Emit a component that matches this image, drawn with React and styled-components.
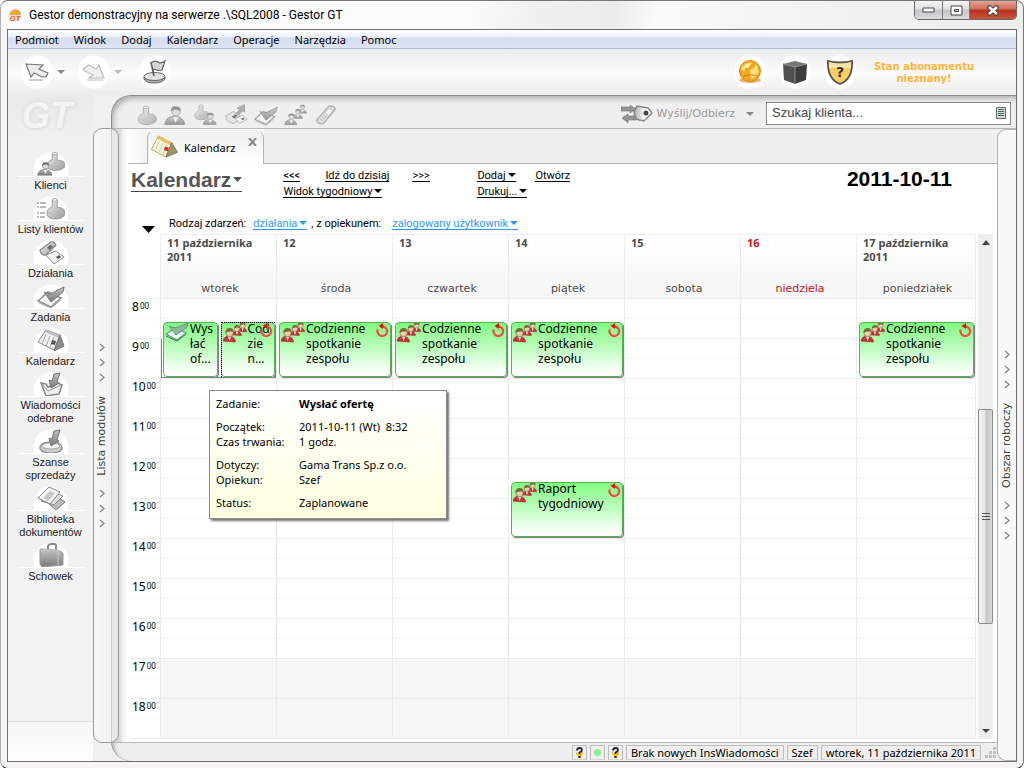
import React from "react";
import styled, { createGlobalStyle, css } from "styled-components";

const ui = `"Noto Sans", "Open Sans", sans-serif`;
const narrow = `Roboto, "Noto Sans", sans-serif`;
const arial = `"Liberation Sans", Arial, sans-serif`;

const Global = createGlobalStyle`
  *, *::before, *::after { box-sizing: border-box; }
  body { margin: 0; font: 11px/15px ${ui}; color: #000; background: #fff; }
  button { font: inherit; color: inherit; background: none; border: 0; padding: 0; margin: 0; cursor: pointer; text-align: inherit; }
  svg { display: block; }
`;

/* ---------- window frame ---------- */

const Window = styled.div`
  min-height: 100vh;
  display: flex;
  flex-direction: column;
  padding: 0 6px 6px;
  border: 1px solid #777;
  border-left-color: #b0aeae;
  border-bottom-color: #222;
  border-radius: 8px;
  background: #f6f4f4;
`;

const TitleBar = styled.header`
  height: 28px;
  display: flex;
  align-items: flex-start;
  margin: 0 -6px;
  padding: 0 6px 0 7px;
  border-radius: 8px 8px 0 0;
  background: linear-gradient(100deg, #fbfbfb 0 46%, #f0f0f0 52%, #ececec 60%, #fafafa 64%, #f2f2f2 80%, #ededed);
`;

const TitleText = styled.h1`
  flex: 1;
  margin: 5px 0 0 6px;
  font: 12px/18px ${narrow};
`;

const AppIcon = styled.div`
  margin-top: 7px;
`;

const WindowButtons = styled.div`
  display: flex;
  height: 19px;
  border: 1px solid #67676c;
  border-top: 0;
  border-radius: 0 0 5px 5px;
  overflow: hidden;
`;

const WindowButton = styled.button`
  width: ${(p) => (p.$close ? 47 : 27)}px;
  display: grid;
  place-items: center;
  background: ${(p) =>
    p.$close
      ? "linear-gradient(#e2a595, #cf6b57 45%, #b8311c 50%, #c8553a)"
      : "linear-gradient(#f6f6f6, #dedede 45%, #c4c4c6 50%, #dcdcdc)"};
  & + & { border-left: 1px solid #77777c; }
`;

const Client = styled.div`
  flex: 1;
  display: flex;
  flex-direction: column;
  border: 1px solid #6e6e6e;
  background: #f0f0f0;
`;

const MenuBar = styled.nav`
  height: 19px;
  display: flex;
  gap: 15px;
  padding: 0 7px;
  border-bottom: 1px solid #b5bdd4;
  background: linear-gradient(#fff, #eceff8 7px, #d5dcee 8px, #dfe5f4);
`;

const MenuItem = styled.button`
  font-size: 11px;
  line-height: 19px;
`;

/* ---------- upper toolbar ---------- */

const TopBar = styled.div`
  height: 46px;
  display: flex;
  align-items: center;
  padding: 0 37px 0 12px;
  background: linear-gradient(#ececec, #fbfbfb 55%, #ececec);
`;

const RoundButton = styled.button`
  width: 34px;
  height: 34px;
  border-radius: 50%;
  display: grid;
  place-items: center;
  background: radial-gradient(#fff 58%, #fdfdfd 66%, #f6f6f6 72%);
`;

const DropButton = styled.button`
  width: 14px;
  height: 34px;
  display: grid;
  place-items: center;
  margin-right: ${(p) => p.$gap || 0}px;
`;

const Subscription = styled.p`
  width: 110px;
  margin: 1px 0 0 12px;
  color: #ffb43a;
  font: bold 10px/12px "DejaVu Sans", Verdana, sans-serif;
  text-align: center;
`;

const Group = styled.div`
  display: flex;
  align-items: center;
  gap: ${(p) => p.$gap || 0}px;
`;

const Spacer = styled.div`
  flex: 1;
`;

/* ---------- body ---------- */

const Body = styled.div`
  flex: 1;
  display: grid;
  grid-template-columns: 85px 18px minmax(0, 1fr);
`;

const Sidebar = styled.aside`
  display: flex;
  flex-direction: column;
  background: linear-gradient(#eaeaea, #f0f0f0 40px, #f2f2f2);
`;

const Logo = styled.div`
  height: 57px;
  padding: 0 0 0 14px;
  color: #f5f5f5;
  font: italic bold 36px/42px ${arial};
  text-shadow: 0 0 5px #dadada, 1px 1px 3px #dfdfdf;
`;

const ModuleList = styled.nav`
  flex: 1;
  display: flex;
  flex-direction: column;
`;

const Module = styled.button`
  display: flex;
  flex-direction: column;
  align-items: center;
  padding: 0 0 4px;
  color: #222;
  font: 11px/13px ${arial};
  text-align: center;
  white-space: pre-line;
`;

const ModuleIcon = styled.span`
  width: 66px;
  height: 25px;
  display: flex;
  justify-content: center;
  align-items: flex-end;
  margin-bottom: 2px;
  border-bottom: 1px solid #fff;
  background: radial-gradient(circle at 50% 18px, #fff 17px, transparent 18px);
`;

const SidebarFoot = styled.div`
  height: 40px;
  border-top: 1px solid #e2e2e2;
  background: linear-gradient(#f6f6f6, #fefefe);
`;

const ModuleStrip = styled.button`
  z-index: 1;
  width: 26px;
  margin: 33px 0 18px;
  display: flex;
  flex-direction: column;
  align-items: center;
  justify-content: center;
  gap: 14px;
  padding-right: 8px;
  border: 1px solid #9a9a9a;
  border-radius: 9px;
  background: linear-gradient(90deg, rgba(252, 252, 252, 0.6), rgba(240, 240, 240, 0.6));
`;

const Chevrons = styled.span`
  display: flex;
  flex-direction: column;
  gap: 6px;
`;

const VerticalText = styled.span`
  writing-mode: vertical-rl;
  transform: rotate(180deg);
  color: #444;
  font: 11px/14px "DejaVu Sans", Verdana, sans-serif;
`;

const Panel = styled.main`
  display: flex;
  flex-direction: column;
  border-top: 1px solid #8e8e8e;
  border-left: 1px solid #8e8e8e;
  border-radius: 20px 0 0 20px;
  background: #efefef;
  box-shadow: inset 3px 4px 5px -1px #b4b4b4;
  overflow: hidden;
`;

const PanelTools = styled.div`
  height: 33px;
  display: flex;
  align-items: center;
  padding: 2px 5px 0 22px;
  border-bottom: 1px solid #b8b8b8;
`;

const ToolButton = styled.button`
  width: 24px;
  height: 26px;
  display: grid;
  place-items: end center;
  opacity: 0.75;
`;

const SendButton = styled.button`
  display: flex;
  align-items: center;
  gap: 3px;
  margin-right: 12px;
  padding-top: 2px;
  color: #9a9a9a;
  font: 11px/16px "DejaVu Sans", Verdana, sans-serif;
  svg + svg { margin-left: 8px; }
`;

const SearchBox = styled.label`
  width: 245px;
  height: 23px;
  display: flex;
  align-items: center;
  padding: 0 4px 0 5px;
  border: 1px solid #8a8a8a;
  background: #fff;
`;

const SearchInput = styled.input`
  flex: 1;
  min-width: 0;
  border: 0;
  outline: 0;
  padding: 0;
  background: none;
  color: #444;
  font: 13px/20px ${arial};
  &::placeholder { color: #444; opacity: 1; }
`;

const PanelRow = styled.div`
  flex: 1;
  display: grid;
  grid-template-columns: minmax(0, 1fr) 19px;
`;

const MainColumn = styled.div`
  display: flex;
  flex-direction: column;
`;

const WorkArea = styled.section`
  flex: 1;
  display: flex;
  flex-direction: column;
  padding: 0 0 3px 16px;
  background: linear-gradient(90deg, #d8d8d8 7px, #f2f2f2 11px, #fff 16px);
  border-bottom: 1px solid #b8b8b8;
`;

const TabBar = styled.div`
  height: 35px;
  display: flex;
  &::before {
    content: "";
    width: 19px;
    border-bottom: 1px solid #b4b4b4;
    background: linear-gradient(90deg, #fff, #f2f2f2);
  }
  &::after {
    content: "";
    flex: 1;
    border-bottom: 1px solid #b4b4b4;
    background: #efefef;
  }
`;

const Tab = styled.div`
  width: 117px;
  display: flex;
  align-items: flex-start;
  padding: 5px 6px 0 3px;
  border: 1px solid #b4b4b4;
  border-top-color: transparent;
  border-bottom: 0;
  border-radius: 9px 9px 0 0;
  background: linear-gradient(#f0f0f0, #fff);
`;

const TabTitle = styled.button`
  flex: 1;
  display: flex;
  align-items: center;
  gap: 6px;
`;

const TabClose = styled.button`
  margin-top: 3px;
`;

const Heading = styled.div`
  display: flex;
  align-items: flex-start;
  height: 50px;
  padding: 4px 45px 0 3px;
`;

const ViewTitle = styled.button`
  display: flex;
  align-items: center;
  gap: 2px;
  height: 24px;
  border-bottom: 1px solid #444;
  color: #555;
  font: bold 21px/24px ${arial};
`;

const LinkColumn = styled.div`
  width: ${(p) => p.$width}px;
  margin-left: ${(p) => p.$left || 0}px;
  padding-top: 1px;
  display: flex;
  flex-direction: column;
  align-items: flex-start;
  gap: 3px;
`;

const LinkRow = styled.div`
  display: grid;
  grid-template-columns: ${(p) => p.$columns};
  justify-items: start;
`;

const Link = styled.a`
  display: inline-flex;
  align-items: center;
  gap: 2px;
  height: 13px;
  font-family: ${narrow};
  line-height: 13px;
  color: ${(p) => (p.$blue ? "#2f96f3" : "#000")};
  text-decoration: none;
  border-bottom: 1px solid currentColor;
`;

const DateTitle = styled.h2`
  margin: -2px 0 0;
  font: bold 21px/25px ${arial};
`;

const Filters = styled.div`
  height: 20px;
  display: flex;
  align-items: center;
  padding: 0 0 1px 14px;
`;

const FilterText = styled.span`
  margin: 0 ${(p) => p.$right}px 0 ${(p) => p.$left}px;
  font-family: ${narrow};
`;

const ExpandButton = styled.button`
  align-self: flex-end;
  width: 13px;
`;

/* ---------- calendar ---------- */

const CalendarRow = styled.div`
  flex: 1;
  display: flex;
  gap: 2px;
  padding: 0 4px 0 2px;
`;

const Calendar = styled.div`
  flex: 1;
  display: grid;
  grid-template-columns: 30px repeat(6, minmax(0, 116fr)) minmax(0, 119fr);
  border-right: 1px solid #ececec;
  align-content: start;
`;

const DayHead = styled.div`
  height: 64px;
  display: flex;
  flex-direction: column;
  justify-content: space-between;
  padding: 1px 0 1px 6px;
  border-left: 1px solid #ececec;
  border-top: 1px solid #ececec;
  background: linear-gradient(#fff, #f5f5f5);
  color: ${(p) => (p.$sunday ? "#cc1018" : "#4c4c4c")};
`;

const DayDate = styled.strong`
  max-width: 96px;
  font-size: 11px;
  line-height: 14px;
`;

const DayName = styled.span`
  padding-right: 3px;
  text-align: center;
  font: 11px/16px "DejaVu Sans", Verdana, sans-serif;
`;

const slots = css`
  background-image: linear-gradient(#ececec 1px, transparent 1px 20px, #f6f6f6 20px 21px, transparent 21px);
  background-size: 100% 40px;
`;

const Hours = styled.div`
  display: grid;
  grid-auto-rows: 40px;
  border-bottom: 1px solid #ececec;
  ${slots}
`;

const Hour = styled.div`
  display: flex;
  align-items: flex-start;
  padding: 1px 0 0 2px;
  font-size: 12px;
  line-height: 15px;
  sup { font-size: 8px; line-height: 9px; margin: 2px 0 0 1px; }
`;

const DayBody = styled.div`
  display: grid;
  grid-template-rows: repeat(22, 20px);
  grid-template-columns: repeat(${(p) => p.$columns}, minmax(0, 1fr));
  column-gap: 3px;
  padding: 0 1px 0 2px;
  border-left: 1px solid #ececec;
  border-bottom: 1px solid #ececec;
  background-color: #fff;
  ${slots}
  &::before {
    content: "";
    grid-row: 19 / 23;
    grid-column: 1 / -1;
    margin: 1px -1px 0 -2px;
    background: linear-gradient(#f6f6f6 0 39px, #ececec 39px 40px, #f6f6f6 40px);
  }
`;

const Selection = styled.div`
  grid-area: 3 / 1 / 5 / 3;
  margin: 1px -1px 0 -2px;
  border: 1px solid #4a8fd8;
  border-top: 0;
`;

const EventBox = styled.article`
  grid-row: ${(p) => p.$row} / span 3;
  grid-column: ${(p) => p.$col || 1};
  margin: 4px 0 1px;
  display: flex;
  align-items: flex-start;
  position: relative;
  padding: 0 1px;
  border: 1px solid #52b552;
  border-radius: 4px;
  background: linear-gradient(#80fc80, #c8fdc8 55%, #fff 95%);
  box-shadow: 1px 1px 0 #808080;
  font-size: 12px;
  line-height: 15px;
  &::after {
    content: "";
    display: ${(p) => (p.$focused ? "block" : "none")};
    position: absolute;
    inset: -1px;
    border: 1px dotted #000;
    border-right: 0;
    border-bottom: 0;
  }
`;

const EventText = styled.p`
  flex: 1;
  min-width: 0;
  margin: -2px 0 0 1px;
  white-space: pre-line;
`;

const Repeat = styled.span`
  position: absolute;
  top: 0;
  right: 1px;
`;

const Tooltip = styled.dl`
  position: absolute;
  z-index: 3;
  left: 45px;
  top: 67px;
  width: 238px;
  display: grid;
  grid-template-columns: 83px 1fr;
  margin: 0;
  padding: 5px 6px 8px;
  border: 1px solid #888;
  background: linear-gradient(#fff, #ffffe1);
  box-shadow: 2px 2px 2px #777;
  font-size: 11px;
  line-height: 15px;
  dt, dd { margin: 0; white-space: pre; }
`;

const Detail = styled.div`
  display: contents;
  dt, dd { padding-bottom: ${(p) => (p.$gap ? 8 : 0)}px; }
`;

const ScrollBar = styled.div`
  width: 15px;
  display: flex;
  flex-direction: column;
  align-items: center;
  justify-content: space-between;
  padding: 6px 0;
  background: #ededed;
`;

const ScrollThumb = styled.div`
  width: 15px;
  height: 215px;
  margin-top: 58px;
  display: grid;
  place-items: center;
  border: 1px solid #8c8c8c;
  border-radius: 2px;
  background: linear-gradient(90deg, #f6f6f6, #e6e6e8 45%, #c6c6ca 55%, #d8d8da);
`;

const StatusBar = styled.footer`
  height: 18px;
  display: flex;
  justify-content: flex-end;
  align-items: stretch;
  gap: 3px;
  padding: 2px 0 1px;
`;

const StatusCell = styled.div`
  display: flex;
  align-items: center;
  padding: 0 ${(p) => (p.$icon ? 3 : 4)}px;
  border: 1px solid #bdbdbd;
  border-bottom-color: #d8d8d8;
  line-height: 13px;
`;

const WorkStrip = styled.button`
  display: flex;
  flex-direction: column;
  align-items: center;
  justify-content: center;
  gap: 14px;
  border: 1px solid #b0b0b0;
  border-right: 0;
  border-radius: 9px 0 0 9px;
  background: #f8f8f8;
`;

/* ---------- drawings ---------- */

const Caret = ({ size = 8, color = "#000" }) => (
  <svg width={size} height={Math.ceil(size / 2)} viewBox="0 0 8 4" preserveAspectRatio="none" aria-hidden="true">
    <path d="M0 0h8L4 4z" fill={color} />
  </svg>
);

const ChevronStack = () => (
  <Chevrons>
    {[0, 1, 2].map((i) => (
      <svg key={i} width="6" height="9" viewBox="0 0 6 9" aria-hidden="true">
        <path d="M1 1l4 3.500L1 8" fill="none" stroke="#888" strokeWidth="1.300" />
      </svg>
    ))}
  </Chevrons>
);

const Svg = ({ w = 24, h = 22, box = "0 0 28 24", children }) => (
  <svg width={w} height={h} viewBox={box} aria-hidden="true">
    <defs>
      <linearGradient id="metal" x1="0" y1="0" x2="1" y2="1">
        <stop offset="0" stopColor="#f0f0f0" />
        <stop offset="1" stopColor="#9a9a9a" />
      </linearGradient>
      <linearGradient id="dark" x1="0" y1="0" x2="0" y2="1">
        <stop offset="0" stopColor="#c2c2c2" />
        <stop offset="1" stopColor="#7a7a7a" />
      </linearGradient>
    </defs>
    {children}
  </svg>
);

const Pawn = () => (
  <>
    <path d="M11 10V3q3-2 6 0v8q8 0 9 4v4q-5 5-14 4-6-1-7-4v-4q1-3 6-5z" fill="url(#metal)" stroke="#959595" />
    <path d="M6 16q8 5 19-1M13 20v2M17 20v2M21 18v2" fill="none" stroke="#b5b5b5" />
    <ellipse cx="14" cy="3" rx="3" ry="1.500" fill="#f4f4f4" stroke="#a5a5a5" />
  </>
);
const Person = ({ x = 0, y = 0, s = 1 }) => (
  <g transform={`translate(${x} ${y}) scale(${s})`}>
    <path d="M1 23q1-8 8-9l5-1 6 3q4 2 4 7z" fill="url(#dark)" stroke="#777" />
    <path d="M11 14l2 7 4-6z" fill="#f4f4f4" />
    <circle cx="14" cy="8" r="5" fill="#d9d9d9" stroke="#888" />
    <path d="M8 8q0-7 6-6 7 0 5 6-3-3-7-2z" fill="#777" />
  </g>
);

const shapes = {
  pawn: <Pawn />,
  person: <Person />,
  client: (
    <>
      <g transform="translate(-3 -1) scale(.8)"><Pawn /></g>
      <Person x={10} y={8} s={0.66} />
    </>
  ),
  clientSide: (
    <>
      <g transform="translate(6 -1) scale(.84)"><Pawn /></g>
      <Person x={0} y={9} s={0.62} />
    </>
  ),
  list: (
    <>
      <g transform="translate(6 1) scale(.84 .95)"><Pawn /></g>
      <path d="M0 7h2m1 0h6M0 11h2m1 0h6M0 17h2m1 0h5M0 21h2m1 0h5" stroke="#777" />
    </>
  ),
  action: (
    <>
      <path d="M9 15l10-4 8 6-10 7z" fill="#f2f2f2" stroke="#909090" />
      <path d="M19 17l3-2 2 2-3 2z" fill="#555" />
      <path d="M3 10L14 2q3-1 5 3L9 15q-5 1-6-5z" fill="url(#metal)" stroke="#8a8a8a" strokeWidth="1.300" />
      <path d="M10 8l3-3 3 1-3 4z" fill="#666" />
    </>
  ),
  phoneNote: (
    <>
      <path d="M2 13l9-5 10 7-10 7q-9-2-9-9z" fill="#e4e4e4" stroke="#999" />
      <path d="M14 10l5-5-4-1 9-4v9l-2-2-5 5z" fill="#999" stroke="#888" />
      <path d="M13 16l9-4 5 5-9 5z" fill="#f2f2f2" stroke="#999" />
      <path d="M9 14l4-3 3 2-4 3zM20 16l3-1 1 2-3 1z" fill="#555" />
    </>
  ),
  task: (
    <>
      <path d="M1 17l10-9 13 6-10 9z" fill="#f4f4f4" stroke="#8d8d8d" strokeWidth="1.500" />
      <path d="M2 19l12 5 10-8" fill="none" stroke="#aaa" />
      <path d="M7 8l6 2L27 3l-1 5-12 10z" fill="url(#dark)" stroke="#7c7c7c" />
    </>
  ),
  group: (
    <>
      <Person x={15} y={-1} s={0.48} />
      <Person x={9} y={4} s={0.52} />
      <Person x={0} y={9} s={0.62} />
    </>
  ),
  mobile: (
    <>
      <path d="M3 18L17 2q5-2 8 3L11 22q-6 1-8-4z" fill="#ddd" stroke="#999" strokeWidth="1.500" />
      <path d="M13 9l5-5 4 3-5 6z" fill="#fff" stroke="#aaa" />
      <path d="M7 16l4 3M9 14l4 3M11 12l4 3" stroke="#aaa" />
    </>
  ),
  calendar: (
    <>
      <path d="M1 14L9 2l14 5-6 15z" fill="#f0f0f0" stroke="#8d8d8d" />
      <path d="M9 2l14 5-1 3L8 4z" fill="#bbb" />
      <path d="M23 7l4 11-10 5z" fill="#8a8a8a" stroke="#777" />
      <path d="M9 6l-4 10M13 8L9 18M17 9l-4 11" stroke="#aaa" />
      <path d="M15 12l4 1-1 4-4-1z" fill="#555" />
    </>
  ),
  inbox: (
    <>
      <path d="M4 11l5 1 2 3 10-4 4 2-3 9-13 2z" fill="#eee" stroke="#888" strokeWidth="1.500" />
      <path d="M4 11l7 8 13-6" fill="none" stroke="#999" />
      <path d="M17 2l6-1-3 9 2 1-8 5-2-8 3 1z" fill="url(#dark)" stroke="#777" />
    </>
  ),
  sale: (
    <>
      <path d="M3 18q1-5 11-5t11 5v2q-2 4-11 4T3 20z" fill="#ccc" stroke="#888" strokeWidth="1.200" />
      <ellipse cx="14" cy="17" rx="9" ry="3" fill="#f2f2f2" stroke="#aaa" />
      <path d="M17 2l6-1-3 10 2 1-8 5-2-8 3 1z" fill="url(#dark)" stroke="#777" />
    </>
  ),
  library: (
    <>
      <path d="M12 18l9-7 7 5-9 8z" fill="#bbb" stroke="#777" />
      <path d="M4 15L14 5l12 5-9 9z" fill="#ddd" stroke="#888" />
      <path d="M1 12L12 1l11 5-10 12z" fill="#f4f4f4" stroke="#888" />
      <path d="M6 12l7-7 5 2-7 8z" fill="#c6c6c6" />
    </>
  ),
  briefcase: (
    <>
      <path d="M11 6V3q1-2 3-2h3q2 0 2 2v4" fill="none" stroke="#888" strokeWidth="2" />
      <path d="M3 6l18 1 5 3v12L5 24l-2-3z" fill="url(#dark)" stroke="#999" />
      <path d="M4 7h17v15" fill="none" stroke="#ccc" />
    </>
  ),
};

const Drawn = ({ name, w, h }) => <Svg w={w} h={h}>{shapes[name]}</Svg>;

const BackArrow = () => (
  <svg width="24" height="20" viewBox="0 0 24 20" aria-hidden="true">
    <path d="M4 18h14" stroke="#ccc" strokeWidth="2" />
    <path d="M1 2l17 1-4 4 9 4-2 4h-4l-8-4-3 4z" fill="#ececec" stroke="#777" strokeWidth="1.200" />
  </svg>
);
const ForwardArrow = () => (
  <svg width="24" height="20" viewBox="0 0 24 20" aria-hidden="true">
    <path d="M5 18h16" stroke="#ddd" strokeWidth="2" />
    <path d="M1 7l6-4 7 4 3-4 5 13H7l4-3-8-4z" fill="#f0f0f0" stroke="#bcbcbc" strokeWidth="1.200" />
  </svg>
);
const FlagStand = () => (
  <svg width="24" height="24" viewBox="0 0 24 24" aria-hidden="true">
    <path d="M1 17v2q2 4 10 4t11-4v-2z" fill="#aaa" stroke="#666" />
    <ellipse cx="11.500" cy="16.500" rx="10.500" ry="4" fill="#e2e2e2" stroke="#666" />
    <path d="M11 16L8 2" fill="none" stroke="#555" strokeWidth="1.600" />
    <path d="M8 3q4-3 7-1t7-1l-3 9q-4 1-9-1z" fill="#d4d4d4" stroke="#666" strokeWidth="1.200" />
  </svg>
);
const Globe = () => (
  <svg width="24" height="24" viewBox="0 0 24 24" aria-hidden="true">
    <ellipse cx="12" cy="20" rx="11" ry="3" fill="#d97a22" opacity=".6" />
    <circle cx="12" cy="11" r="10.500" fill="#f5a81c" stroke="#d98a10" />
    <path d="M3 8q5-6 11-5l-3 4-4 1-1 5zM12 10l6-3 3 4-3 6-5 2z" fill="#ffdf7e" />
    <circle cx="9" cy="6" r="2" fill="#fff4cc" /><circle cx="18" cy="7" r="1.500" fill="#fff4cc" />
    <path d="M5 17q6-4 15-1" fill="none" stroke="#e07a10" />
  </svg>
);
const Cube = () => (
  <svg width="24" height="25" viewBox="0 0 24 25" aria-hidden="true">
    <path d="M0 4l12-3 12 3-12 3z" fill="#777" />
    <path d="M0 4l12 3v17L1 20z" fill="#505050" /><path d="M12 7l12-3-1 16-11 4z" fill="#3e3e3e" />
    <path d="M0 4l12 3 12-3M12 7v17" fill="none" stroke="#8a8a8a" />
  </svg>
);
const Shield = () => (
  <svg width="26" height="26" viewBox="0 0 26 26" aria-hidden="true">
    <path d="M1 2q12 3 24 0 1 18-12 23Q0 20 1 2z" fill="#f9cd62" stroke="#555" strokeWidth="1.800" />
    <path d="M2 3q11 3 22 0v6H2z" fill="#fff" opacity=".45" />
    <text x="13" y="18" textAnchor="middle" fontFamily="DejaVu Sans" fontWeight="700" fontSize="14" fill="#333">?</text>
  </svg>
);
const AppMark = () => (
  <svg width="15" height="15" viewBox="0 0 15 15" aria-hidden="true">
    <circle cx="7" cy="7" r="6.500" fill="#ddd" />
    <path d="M2 7a5.500 5.500 0 0 1 11 0z" fill="#f0a52c" />
    <text x="7" y="13" textAnchor="middle" fontFamily="Liberation Sans" fontWeight="700" fontStyle="italic" fontSize="8" fill="#e8641e">GT</text>
  </svg>
);
const ExchangeIcon = () => (
  <svg width="32" height="20" viewBox="0 0 32 20" aria-hidden="true">
    <defs>
      <linearGradient id="tag" x1="0" x2="1"><stop offset="0" stopColor="#aaa" /><stop offset=".6" stopColor="#fff" /></linearGradient>
    </defs>
    <path d="M13 7l3-5 11 2 4 5-8 8-9-2z" fill="url(#tag)" stroke="#888" strokeWidth="1.500" />
    <path d="M0 3h9V1l6 4-6 4V7H0zM15 16H7v3l-6-5 6-4v2h8z" fill="#959595" stroke="#777" strokeWidth=".6" />
    <circle cx="25" cy="9" r="2.500" fill="#444" />
  </svg>
);
const ListGlyph = () => (
  <svg width="10" height="12" viewBox="0 0 10 12" aria-hidden="true">
    <path d="M.5.500h9v11h-9z" fill="#deded2" stroke="#666" />
    <path d="M2 2.500h6M2 4.500h6M2 6.500h6M2 8.500h6" stroke="#3a6674" />
  </svg>
);
const TabIcon = () => (
  <svg width="27" height="24" viewBox="0 0 27 25" aria-hidden="true">
    <path d="M7 1l14 7-6 15L0 15z" fill="#fbf4d6" stroke="#b8a878" />
    <path d="M7 1l14 7-1 3L6 4z" fill="#f0c060" />
    <path d="M21 8l6 10-12 5z" fill="#9c9468" stroke="#7e7750" />
    <path d="M8 6l-4 10M12 8l-4 10M16 10l-4 11" stroke="#d8cfa8" />
    <path d="M14 12l4 1-1 4-4-1z" fill="#e02830" />
  </svg>
);
const Face = ({ x, y, s }) => (
  <g transform={`translate(${x} ${y}) scale(${s})`}>
    <path d="M0 16q1-6 7-6 6 0 8 5v2z" fill="#d03038" stroke="#8e2028" strokeWidth=".8" />
    <path d="M6 10l2 6 2-6z" fill="#fff" />
    <circle cx="8" cy="6" r="4.500" fill="#eed0a8" stroke="#7a5c38" strokeWidth=".8" />
    <path d="M3 6q0-6 5-6t5 5q-4-2-10 1z" fill="#7a6840" />
  </g>
);
const MeetingIcon = () => (
  <svg width="24" height="20" viewBox="0 0 24 20" aria-hidden="true">
    <Face x={15} y={-1} s={0.58} />
    <Face x={9} y={2} s={0.62} />
    <Face x={0} y={5} s={0.82} />
  </svg>
);
const TaskIcon = () => (
  <svg width="24" height="20" viewBox="0 0 24 20" aria-hidden="true">
    <path d="M1 11l9-6 11 5-9 7z" fill="#eaf6ee" stroke="#6aa084" strokeWidth="1.200" />
    <path d="M1 13l11 5 9-7" fill="none" stroke="#386a55" />
    <path d="M4 3l6 2L23 0l-1 4-11 8z" fill="#8fb8a0" stroke="#5c8a74" strokeWidth=".8" />
  </svg>
);
const RepeatIcon = () => (
  <svg width="13" height="14" viewBox="0 0 13 14" aria-hidden="true">
    <path d="M1.800 6.500a4.800 4.800 0 1 0 5-3" fill="none" stroke="#ea5048" strokeWidth="2.300" />
    <path d="M2.500 3L7 0v6z" fill="#f00808" />
  </svg>
);
const Question = () => (
  <svg width="7" height="11" viewBox="0 0 7 11" aria-hidden="true">
    <path d="M0 5l3 2.500L7 5v2L5 9v2H2V8.500L0 7z" fill="#f5b800" />
    <path d="M1 3.500Q1 1 3.500 1T6 3q0 1.500-2.500 2.500V7" fill="none" stroke="#223" strokeWidth="1.800" />
    <path d="M2.500 9h2v2h-2z" fill="#223" />
  </svg>
);

/* ---------- data ---------- */

const menus = ["Podmiot", "Widok", "Dodaj", "Kalendarz", "Operacje", "Narzędzia", "Pomoc"];

const modules = [
  ["clientSide", "Klienci"],
  ["list", "Listy klientów"],
  ["action", "Działania"],
  ["task", "Zadania"],
  ["calendar", "Kalendarz"],
  ["inbox", "Wiadomości\nodebrane"],
  ["sale", "Szanse\nsprzedaży"],
  ["library", "Biblioteka\ndokumentów"],
  ["briefcase", "Schowek"],
];

const tools = [
  ["pawn", "Klient"],
  ["person", "Osoba"],
  ["client", "Kontakt"],
  ["phoneNote", "Działanie"],
  ["task", "Zadanie"],
  ["group", "Spotkanie"],
  ["mobile", "Telefon"],
];

const daily = { row: 2, text: "Codzienne\nspotkanie\nzespołu" };
const days = [
  { date: "11 października 2011", name: "wtorek", events: [], today: true },
  { date: "12", name: "środa", events: [daily] },
  { date: "13", name: "czwartek", events: [daily] },
  { date: "14", name: "piątek", events: [daily, { row: 10, text: "Raport\ntygodniowy" }] },
  { date: "15", name: "sobota", events: [] },
  { date: "16", name: "niedziela", events: [], sunday: true },
  { date: "17 października 2011", name: "poniedziałek", events: [daily] },
];

const details = [
  ["Zadanie:", <b key="b">Wysłać ofertę</b>, true],
  ["Początek:", "2011-10-11 (Wt)  8:32", false],
  ["Czas trwania:", "1 godz.", true],
  ["Dotyczy:", "Gama Trans Sp.z o.o.", false],
  ["Opiekun:", "Szef", true],
  ["Status:", "Zaplanowane", false],
];

const hours = [8, 9, 10, 11, 12, 13, 14, 15, 16, 17, 18];

const Meeting = ({ row, col, text, focused }) => (
  <EventBox $row={row} $col={col} $focused={focused}>
    <MeetingIcon />
    <EventText>{text}</EventText>
    <Repeat><RepeatIcon /></Repeat>
  </EventBox>
);

export default function App() {
  return (
    <>
      <Global />
      <Window>
        <TitleBar>
          <AppIcon><AppMark /></AppIcon>
          <TitleText>Gestor demonstracyjny na serwerze .\SQL2008 - Gestor GT</TitleText>
          <WindowButtons>
            <WindowButton aria-label="Minimalizuj">
              <svg width="13" height="6"><path d="M1 1h11v4H1z" fill="#fff" stroke="#445" /></svg>
            </WindowButton>
            <WindowButton aria-label="Maksymalizuj">
              <svg width="13" height="11"><path d="M1 1h11v9H1z" fill="#fff" stroke="#445" /><path d="M4.500 4.500h4v2h-4z" fill="#ccc" stroke="#445" /></svg>
            </WindowButton>
            <WindowButton $close aria-label="Zamknij">
              <svg width="14" height="11"><path d="M2 1l10 9M12 1L2 10" stroke="#54454a" strokeWidth="4.500" /><path d="M3 2l8 7M11 2L3 9" stroke="#fff" strokeWidth="2.500" /></svg>
            </WindowButton>
          </WindowButtons>
        </TitleBar>

        <Client>
          <MenuBar>{menus.map((m) => <MenuItem key={m}>{m}</MenuItem>)}</MenuBar>

          <TopBar>
            <RoundButton aria-label="Wstecz"><BackArrow /></RoundButton>
            <DropButton $gap={9} aria-label="Historia wstecz"><Caret color="#888" /></DropButton>
            <RoundButton aria-label="Dalej"><ForwardArrow /></RoundButton>
            <DropButton $gap={13} aria-label="Historia dalej"><Caret color="#bbb" /></DropButton>
            <RoundButton aria-label="Start"><FlagStand /></RoundButton>
            <Spacer />
            <Group $gap={11}>
              <RoundButton aria-label="Internet"><Globe /></RoundButton>
              <RoundButton aria-label="Moduły"><Cube /></RoundButton>
              <RoundButton aria-label="Abonament"><Shield /></RoundButton>
            </Group>
            <Subscription>Stan abonamentu nieznany!</Subscription>
          </TopBar>

          <Body>
            <Sidebar>
              <Logo>GT</Logo>
              <ModuleList>
                {modules.map(([icon, label]) => (
                  <Module key={label}>
                    <ModuleIcon><Drawn name={icon} w={28} h={24} /></ModuleIcon>
                    {label}
                  </Module>
                ))}
              </ModuleList>
              <SidebarFoot />
            </Sidebar>

            <ModuleStrip>
              <ChevronStack />
              <VerticalText>Lista modułów</VerticalText>
              <ChevronStack />
            </ModuleStrip>

            <Panel>
              <PanelTools>
                <Group $gap={6}>
                  {tools.map(([icon, label]) => (
                    <ToolButton key={label} aria-label={label}><Drawn name={icon} w={24} h={22} /></ToolButton>
                  ))}
                </Group>
                <Spacer />
                <SendButton>
                  <ExchangeIcon />
                  Wyślij/Odbierz
                  <Caret color="#888" />
                </SendButton>
                <SearchBox>
                  <SearchInput placeholder="Szukaj klienta..." aria-label="Szukaj klienta" />
                  <ListGlyph />
                </SearchBox>
              </PanelTools>

              <PanelRow>
                <MainColumn>
                  <WorkArea>
                    <TabBar>
                      <Tab>
                        <TabTitle><TabIcon />Kalendarz</TabTitle>
                        <TabClose aria-label="Zamknij kartę">
                          <svg width="9" height="8"><path d="M1 0l7 8M8 0L1 8" stroke="#888" strokeWidth="2" /></svg>
                        </TabClose>
                      </Tab>
                    </TabBar>

                    <Heading>
                      <ViewTitle>Kalendarz<Caret size={9} color="#555" /></ViewTitle>
                      <LinkColumn $left={41} $width={194}>
                        <LinkRow $columns="42px 87px auto">
                          <Link href="#prev">&lt;&lt;&lt;</Link>
                          <Link href="#today">Idź do dzisiaj</Link>
                          <Link href="#next">&gt;&gt;&gt;</Link>
                        </LinkRow>
                        <Link href="#view">Widok tygodniowy<Caret /></Link>
                      </LinkColumn>
                      <LinkColumn $width={120}>
                        <LinkRow $columns="58px auto">
                          <Link href="#add">Dodaj<Caret /></Link>
                          <Link href="#open">Otwórz</Link>
                        </LinkRow>
                        <Link href="#print">Drukuj...<Caret /></Link>
                      </LinkColumn>
                      <Spacer />
                      <DateTitle>2011-10-11</DateTitle>
                    </Heading>

                    <Filters>
                      <ExpandButton aria-label="Rozwiń"><Caret size={13} /></ExpandButton>
                      <FilterText $left={14} $right={7}>Rodzaj zdarzeń:</FilterText>
                      <Link href="#kind" $blue>działania<Caret color="#2f96f3" /></Link>
                      <FilterText $left={4} $right={11}>, z opiekunem:</FilterText>
                      <Link href="#owner" $blue>zalogowany użytkownik<Caret color="#2f96f3" /></Link>
                    </Filters>

                    <CalendarRow>
                      <Calendar>
                        <span />
                        {days.map((d) => (
                          <DayHead key={d.date} $sunday={d.sunday}>
                            <DayDate>{d.date}</DayDate>
                            <DayName>{d.name}</DayName>
                          </DayHead>
                        ))}
                        <Hours>
                          {hours.map((h) => <Hour key={h}>{h}<sup>00</sup></Hour>)}
                        </Hours>
                        {days.map((d) => (
                          <DayBody key={d.date} $columns={d.today ? 2 : 1}>
                            {d.today && (
                              <>
                                <Selection />
                                <EventBox $row={2} $col={1}>
                                  <TaskIcon />
                                  <EventText>{"Wys\nłać\nof..."}</EventText>
                                  <Tooltip>
                                    {details.map(([term, value, gap]) => (
                                      <Detail key={term} $gap={gap}><dt>{term}</dt><dd>{value}</dd></Detail>
                                    ))}
                                  </Tooltip>
                                </EventBox>
                                <Meeting row={2} col={2} text={"Cod\nzie\nn..."} focused />
                              </>
                            )}
                            {d.events.map((e) => <Meeting key={e.row} {...e} />)}
                          </DayBody>
                        ))}
                      </Calendar>
                      <ScrollBar>
                        <svg width="8" height="5"><path d="M0 5l4-5 4 5z" fill="#444" /></svg>
                        <ScrollThumb>
                          <svg width="8" height="9"><path d="M0 1.500h8M0 4.500h8M0 7.500h8" stroke="#555" /></svg>
                        </ScrollThumb>
                        <Caret color="#444" />
                      </ScrollBar>
                    </CalendarRow>
                  </WorkArea>

                  <StatusBar>
                    <StatusCell $icon><Question /></StatusCell>
                    <StatusCell $icon>
                      <svg width="7" height="7"><circle cx="3.500" cy="3.500" r="3.500" fill="#86f486" /></svg>
                    </StatusCell>
                    <StatusCell $icon><Question /></StatusCell>
                    <StatusCell>Brak nowych InsWiadomości</StatusCell>
                    <StatusCell>Szef</StatusCell>
                    <StatusCell>wtorek, 11 października 2011</StatusCell>
                    <svg width="13" height="14"><path d="M9 2h3v3H9zM5 6h3v3H5zM9 6h3v3H9zM1 10h3v3H1zM5 10h3v3H5zM9 10h3v3H9z" fill="#c0c0c0" /></svg>
                  </StatusBar>
                </MainColumn>

                <WorkStrip>
                  <ChevronStack />
                  <VerticalText>Obszar roboczy</VerticalText>
                  <ChevronStack />
                </WorkStrip>
              </PanelRow>
            </Panel>
          </Body>
        </Client>
      </Window>
    </>
  );
}
